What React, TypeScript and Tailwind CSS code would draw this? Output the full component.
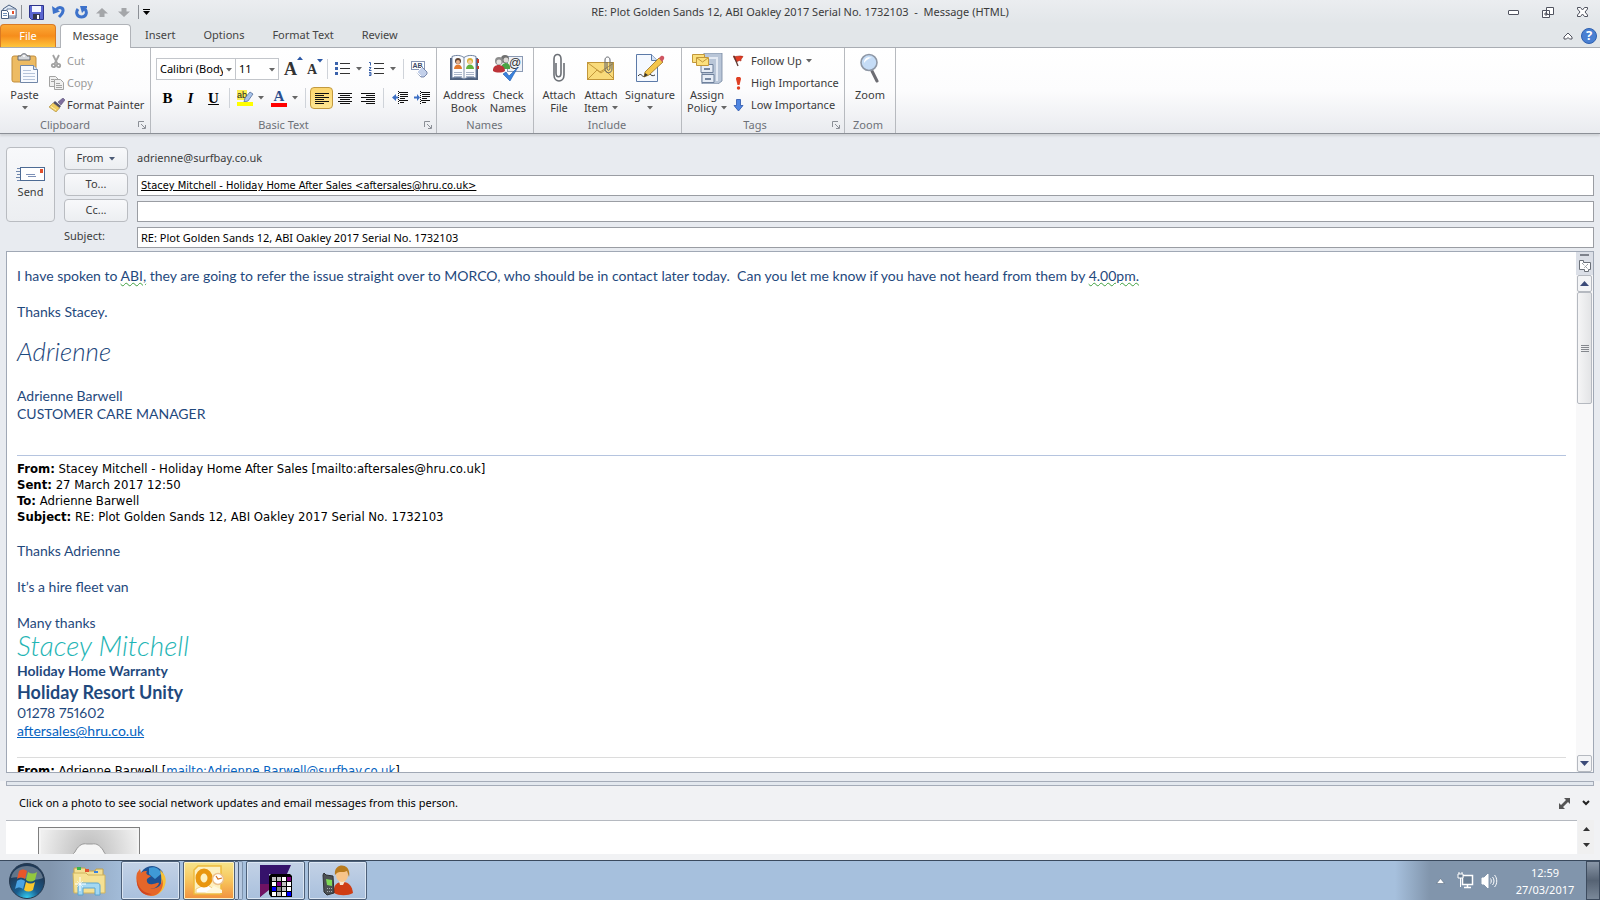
import React from 'react';

type IconProps = { className?: string };

const Caret = ({ className = 'fill-[#666]' }: IconProps) => (
  <svg width="6" height="4" viewBox="0 0 6 4" className={`shrink-0 ${className}`}>
    <path d="M0 0h6L3 3.500z" />
  </svg>
);

const Launcher = () => (
  <svg width="8" height="8" viewBox="0 0 8 8" fill="none" stroke="#8b8f96">
    <path d="M.5 6V.5H6M3 3l4 4M7.500 4v3.500H4" />
  </svg>
);

const MailIcon = () => (
  <svg width="17" height="16" viewBox="0 0 17 16">
    <path d="M3 5l6-4 7 4v9H3z" fill="#dfe9f5" stroke="#4a5f80" />
    <path d="M7 5h9v7H7z" fill="#fff" stroke="#6b7f9e" />
    <rect x="12" y="7" width="2" height="3" fill="#e2502d" />
    <path d="M1.500 6.500h5l2 2v6h-7z" fill="#fff" stroke="#4a5f80" />
    <path d="M3 9.500h4M3 11.500h4" stroke="#6f8fb8" />
  </svg>
);

const SaveIcon = () => (
  <svg width="15" height="15" viewBox="0 0 15 15">
    <path d="M.5.5h14v14h-12l-2-2z" fill="#5a66d0" stroke="#2d348c" />
    <rect x="3" y="1" width="9" height="6" fill="#f4f7ff" />
    <rect x="4" y="9" width="7" height="5" fill="#34384a" />
    <rect x="8" y="10" width="2" height="4" fill="#fff" />
  </svg>
);

const UndoIcon = () => (
  <svg width="13" height="14" viewBox="0 0 13 14" fill="none">
    <path d="M4 5c3-4 7.500-2.500 7 1-.3 3-2 4-4 6" stroke="#3d72cb" strokeWidth="3" />
    <path d="M0 1l1 8 7-2.500z" fill="#3d72cb" />
  </svg>
);

const RedoIcon = () => (
  <svg width="13" height="13" viewBox="0 0 13 13" fill="none">
    <path d="M3 3C0 7 2.500 11 6.500 11s6.500-4 3.500-8" stroke="#3d72cb" strokeWidth="3" />
    <path d="M5 0h7v1.500L7 7z" fill="#3d72cb" />
  </svg>
);

const ArrowUp = ({ className = '' }: IconProps) => (
  <svg width="12" height="9" viewBox="0 0 12 9" className={className}>
    <path d="M6 0l6 5.500H8.500V9h-5V5.500H0z" fill="#a4a6a9" />
  </svg>
);

const PasteIcon = () => (
  <svg width="28" height="31" viewBox="0 0 28 31">
    <rect x="1" y="3" width="24" height="26" rx="2" fill="#edbb63" stroke="#c18d3c" />
    <path d="M7 3h3c0-3 6-3 6 0h3v4H7z" fill="#d5d8dc" stroke="#666b73" />
    <circle cx="13" cy="3" r="1" fill="#fff" />
    <path d="M9.500 12.500h13l4 4v13h-17z" fill="#f7faff" stroke="#7187a8" />
    <path d="M22.500 12.500v4h4" fill="#dbe5f3" stroke="#7187a8" />
    <path d="M12 17.500h8M12 20.500h12M12 23.500h12M12 26.500h12" stroke="#b6c4da" />
  </svg>
);

const CutIcon = () => (
  <svg width="15" height="15" viewBox="0 0 15 15" fill="none" stroke="#a2a2a2" strokeWidth="1.800">
    <path d="M4 1l4.500 9M10 1L5.500 10" />
    <circle cx="4.500" cy="11.500" r="1.700" />
    <circle cx="9.500" cy="11.500" r="1.700" />
  </svg>
);

const CopyIcon = () => (
  <svg width="15" height="14" viewBox="0 0 15 14" fill="#f0f0f0" stroke="#a2a2a2">
    <path d="M.5.5h6l3 3v7h-9z" />
    <path d="M5.500 3.500h6l3 3v7h-9z" />
    <path d="M7 7.500h4M7 9.500h6M7 11.500h6M2 3.500h3M2 5.500h3" />
  </svg>
);

const BrushIcon = () => (
  <svg width="16" height="14" viewBox="0 0 16 14">
    <path d="M9 4l5-4 2 2-4 5z" fill="#7e6f9e" stroke="#4d466a" strokeWidth=".5" />
    <path d="M6 3l6 5-1.500 2L4 5z" fill="#50506a" />
    <path d="M4 5l6.500 5L7 14 0 9z" fill="#f0cd62" stroke="#a98630" strokeWidth=".6" />
    <path d="M2 8.500l5 3.500" stroke="#fff1b4" />
  </svg>
);

const BulletsIcon = ({ numbered = false }: { numbered?: boolean }) => (
  <svg width="15" height="14" viewBox="0 0 15 14">
    {numbered ? (
      <path d="M0 .5h1.500v3M0 5.500h2l-2 3h2.500M0 10.500h2v3H0m0-1.500h2" stroke="#3a62ab" fill="none" />
    ) : (
      <path d="M0 0h3v3H0zM0 5h3v3H0zM0 10h3v3H0z" fill="#3a62ab" />
    )}
    <path d="M5 1.500h10M5 6.500h10M5 11.500h10" stroke="#333" />
  </svg>
);

const linePaths = {
  left: 'M0 1.500h14M0 3.500h9M0 5.500h14M0 7.500h9M0 9.500h14M0 11.500h9',
  center: 'M0 1.500h14M2 3.500h10M0 5.500h14M2 7.500h10M0 9.500h14M2 11.500h10',
  right: 'M0 1.500h14M5 3.500h9M0 5.500h14M5 7.500h9M0 9.500h14M5 11.500h9',
};

const AlignIcon = ({ align }: { align: keyof typeof linePaths }) => (
  <svg width="14" height="13" viewBox="0 0 14 13" stroke="#111">
    <path d={linePaths[align]} />
  </svg>
);

const IndentIcon = ({ increase = false }: { increase?: boolean }) => (
  <svg width="16" height="14" viewBox="0 0 16 14">
    <path d="M7 1.500h9M8 3.500h8M8 5.500h8M8 7.500h5M7 9.500h9M8 11.500h4" stroke="#111" />
    <path d="M6.500 0v14" stroke="#111" strokeDasharray="1 1" />
    {increase ? <path d="M0 5.500h3V3l3 3.500L3 10V7.500H0z" fill="#3d6fc4" /> : <path d="M6 5.500H4V3L0 6.500 4 10V7.500h2z" fill="#3d6fc4" />}
  </svg>
);

const ClearFormatIcon = () => (
  <svg width="17" height="17" viewBox="0 0 17 17">
    <rect x=".5" y=".5" width="13" height="8" fill="#fff" stroke="#8996b4" />
    <text x="1.500" y="7" fontSize="7" fontWeight="700" fontFamily="Liberation Sans" fill="#3d4a68">AB</text>
    <path d="M6 11l5-5 5 5v2l-3 3h-3z" fill="#c3d0ea" stroke="#5f7199" strokeWidth=".8" />
    <path d="M6 11l4 4M11 6l-5 5" stroke="#fff" />
  </svg>
);

const HighlightIcon = () => (
  <svg width="17" height="17" viewBox="0 0 17 17">
    <rect width="10" height="10" fill="#f9ed52" />
    <text x="0" y="8" fontSize="9" fontFamily="Liberation Sans" fill="#222">ab</text>
    <path d="M8 8l5-6 3 2-5 7-4 1z" fill="#aac4ea" stroke="#44608f" strokeWidth=".7" />
    <rect y="12" width="16" height="4" fill="#ffff00" />
  </svg>
);

const AddressBookIcon = () => (
  <svg width="30" height="29" viewBox="0 0 30 29">
    <path d="M1 4h28v22H1z" fill="#4e617e" />
    <path d="M3 2.500c5-2 9-1 12 1 3-2 7-3 12-1V24c-5-1-9-1-12 1-3-2-7-2-12-1z" fill="#fafcff" stroke="#6b7f9e" />
    <path d="M15 3.500V25" stroke="#7d8ca5" />
    <circle cx="9" cy="7" r="3" fill="#5d4331" />
    <circle cx="9" cy="8" r="2" fill="#e9b28b" />
    <path d="M5 15c0-6 8-6 8 0z" fill="#e2792d" />
    <circle cx="21" cy="7" r="3" fill="#dab038" />
    <circle cx="21" cy="8" r="2" fill="#f2cda6" />
    <path d="M17 15c0-6 8-6 8 0z" fill="#63b13e" />
    <path d="M5 18.500h8M5 20.500h8M5 22.500h8M17 18.500h8M17 20.500h8M17 22.500h8" stroke="#a9b5c8" />
    <path d="M29 5v4M29 12v3" stroke="#c1392b" strokeWidth="2" />
  </svg>
);

const CheckNamesIcon = () => (
  <svg width="32" height="29" viewBox="0 0 32 29">
    <rect x="15.500" y="2.500" width="15" height="15" fill="#eef2f8" stroke="#8b9ab4" />
    <circle cx="13" cy="5" r="4" fill="#707070" />
    <circle cx="14" cy="6" r="2.500" fill="#dcd9d6" />
    <path d="M9 15c0-8 10-8 9 0z" fill="#49a446" />
    <circle cx="7" cy="7" r="4" fill="#8d8d8d" />
    <circle cx="7" cy="8" r="2.500" fill="#e4e1de" />
    <path d="M1 17c-1-8 12-8 12 0-3 2-9 2-12 0z" fill="#bd3338" />
    <text x="17" y="13" fontSize="12" fontFamily="Liberation Sans" fill="#333">@</text>
    <path d="M11 20l3-2 3 4 9-9-8 14z" fill="#3a82dd" stroke="#1b58ad" strokeWidth=".6" />
  </svg>
);

const ClipIcon = () => (
  <svg width="14" height="31" viewBox="0 0 14 31" fill="none">
    <path d="M4 10v10c0 5 5 5 5 0V6c0-6-7-6-7 0v16c0 8 10 8 10 0V10" stroke="#6b6f75" strokeWidth="1.600" />
  </svg>
);

const AttachItemIcon = () => (
  <svg width="28" height="25" viewBox="0 0 28 25">
    <rect x=".5" y="6.500" width="26" height="17" fill="#f9db7b" stroke="#c2973a" />
    <path d="M1 23l9-9 4 3 4-3 9 9M1 7l12 9L27 7" fill="none" stroke="#c2973a" />
    <path d="M20 6v6c0 3 3 3 3 0V4c0-4-5-4-5 0v9c0 5 7 5 7 0V6" fill="none" stroke="#5d6168" />
  </svg>
);

const SignatureIcon = () => (
  <svg width="30" height="30" viewBox="0 0 30 30">
    <path d="M1.500 1.500h15l6 6v21h-21z" fill="#f5f9ff" stroke="#5c7aa8" />
    <path d="M16.500 1.500v6h6" fill="#d5e2f4" stroke="#5c7aa8" />
    <path d="M3 23c4-5 4 4 8-1s4 3 9 0" fill="none" stroke="#333" />
    <path d="M10 19L24 5l4 4-14 13-5 2z" fill="#f4c64c" stroke="#97701f" strokeWidth=".8" />
    <path d="M24 5l2-2c2-1 4 1 3 3l-2 3z" fill="#cf5561" />
    <path d="M10 20l3 2-4 2z" fill="#333" />
  </svg>
);

const PolicyIcon = () => (
  <svg width="31" height="31" viewBox="0 0 31 31">
    <path d="M10 2l3-2h17v28l-4 3H10z" fill="#b9c6d8" stroke="#7486a0" strokeWidth=".8" />
    <path d="M9 11.500h12v8H9zM10 21.500h12v8H10z" fill="#e7edf6" stroke="#6f819c" />
    <path d="M13 5h12v23" fill="none" stroke="#e4eaf3" strokeWidth="2" />
    <path d="M12 15h6v2h-6zM13 25h6v2h-6z" fill="#7486a0" />
    <path d="M.5 1.500h12v8H.5z" fill="#fbe07e" stroke="#c2973a" />
    <path d="M4.500 4.500h12v8h-12z" fill="#fbe07e" stroke="#c2973a" />
    <path d="M5 5l5.500 4L16 5" fill="none" stroke="#c2973a" />
  </svg>
);

const FlagIcon = () => (
  <svg width="11" height="12" viewBox="0 0 11 12">
    <path d="M0 1c3 1.500 6-1 10 .5-1 2-2.500 2.500-2 4.500-2-1.500-3 1-5 .5z" fill="#e23b24" stroke="#a3200f" strokeWidth=".6" />
    <path d="M1 1l4 10" stroke="#5b3a33" strokeWidth="1.300" />
  </svg>
);

const HighIcon = () => (
  <svg width="11" height="13" viewBox="0 0 11 13" fill="#df3f23">
    <path d="M3 2c0-3 5-3 5 0L6.500 8h-2z" />
    <circle cx="5.500" cy="11" r="1.700" />
  </svg>
);

const LowIcon = () => (
  <svg width="11" height="13" viewBox="0 0 11 13">
    <path d="M3.500.5h4v6h2.500l-4.500 5.500L1 6.500h2.500z" fill="#4f86e2" stroke="#2c56ab" strokeWidth=".8" />
  </svg>
);

const ZoomIcon = () => (
  <svg width="20" height="30" viewBox="0 0 20 30">
    <path d="M12 18l5 10" stroke="#6c6c72" strokeWidth="3" strokeLinecap="round" />
    <circle cx="9" cy="9.500" r="8" fill="#c5dcf6" stroke="#8e97a5" strokeWidth="1.600" />
    <path d="M4 10c0-5 4-7 8-5-3 0-6 2-8 5z" fill="#fff" />
  </svg>
);

const SendIcon = () => (
  <svg width="30" height="15" viewBox="0 0 30 15">
    <path d="M1 1.500h3M0 4.500h4M1 7.500h3M0 10.500h4M1 13.500h3" stroke="#6f87ad" />
    <rect x="4.500" y=".5" width="24" height="13" fill="#fff" stroke="#4d6b94" />
    <rect x="24" y="2" width="3" height="4" fill="#e2502d" />
    <path d="M10 7.500h9M12 9.500h8" stroke="#7c90b7" />
  </svg>
);

const WindowIcons = () => (
  <div className="flex items-center gap-[23px] pr-3">
    <button aria-label="Minimize">
      <svg width="11" height="5" viewBox="0 0 11 5"><rect x=".5" y=".5" width="10" height="4" rx=".5" fill="#fff" stroke="#50535f" /></svg>
    </button>
    <button aria-label="Restore">
      <svg width="12" height="11" viewBox="0 0 12 11" fill="#fff" stroke="#50535f">
        <path d="M4.500.5h7v7h-7zM.5 3.500h7v7h-7zM3 6h2v2H3z" />
      </svg>
    </button>
    <button aria-label="Close">
      <svg width="11" height="10" viewBox="0 0 11 10">
        <path d="M.5.5h3l2 2.500 2-2.500h3v1.500L8 5l2.500 3v1.500h-3L5.500 7l-2 2.500h-3V8L3 5 .5 2z" fill="#fff" stroke="#50535f" />
      </svg>
    </button>
  </div>
);

const StartOrb = () => (
  <svg width="38" height="38" viewBox="0 0 38 38">
    <defs>
      <radialGradient id="orb" cx="50%" cy="100%" r="75%">
        <stop offset="0" stopColor="#35d3f7" />
        <stop offset=".45" stopColor="#1a5d8e" />
        <stop offset="1" stopColor="#1f3a58" />
      </radialGradient>
    </defs>
    <circle cx="19" cy="19" r="17.500" fill="url(#orb)" stroke="#26394f" />
    <path d="M3 16C6 0 32 0 35 16 24 21 13 13 3 16z" fill="#fff" opacity=".3" />
    <path d="M11 9c3-2 5-2 8 0l-2 8c-3-2-5-2-8 0z" fill="#e8562a" />
    <path d="M20 10c3 2 6 2 9 0l-2 8c-3 2-6 2-9 0z" fill="#93c83e" />
    <path d="M9 19c3-2 5-2 8 0l-2 8c-3-2-5-2-8 0z" fill="#4aa3e4" />
    <path d="M18 20c3 2 6 2 9 0l-2 8c-3 2-6 2-9 0z" fill="#fbc72e" />
  </svg>
);

const ExplorerIcon = () => (
  <svg width="34" height="30" viewBox="0 0 34 30">
    <path d="M2 2h11l2 3h8l1-2h7v23H2z" fill="#f3df93" stroke="#c0a04c" />
    <rect x="5" y="1" width="4" height="3" fill="#3bb54a" />
    <rect x="13" y="3" width="4" height="3" fill="#e2502d" />
    <rect x="22" y="5" width="4" height="2" fill="#3a82dd" />
    <path d="M1 7h13l2 2h17v18H2z" fill="#f5e194" stroke="#d0b35c" />
    <path d="M6 29V20c0-2 1-3 3-3h16c2 0 3 1 3 3v9h-5v-7H11v7z" fill="#a3d8f2" stroke="#5aa4d0" />
    <path d="M8 11v14M3 18h11" stroke="#fff" />
    <path d="M5 15l6 6M11 15l-6 6" stroke="#fff" strokeWidth=".6" />
  </svg>
);

const FirefoxIcon = () => (
  <svg width="32" height="32" viewBox="0 0 32 32">
    <circle cx="17" cy="13" r="12" fill="#1d5294" />
    <path d="M14 3c5-2 11 0 12 6l-6 5-6-5z" fill="#3f9ad6" />
    <path d="M25 5c5 4 7 9 5 15-2 7-8 11-14 11 8-3 13-11 9-26z" fill="#f8c23a" />
    <path d="M2 8l3-4 1 4c2-2 4-2 6-2-1 2-1 3 1 4l3 1-4 3c-1 4 2 6 6 5 2 0 4-2 6-1-1 4-5 6-9 5 6 2 12-2 12-9 3 7-2 17-11 17C6 31-1 19 2 8z" fill="#e5662a" />
    <path d="M2 14c1 9 6 14 15 15-7 3-16-3-15-15z" fill="#cf4520" />
  </svg>
);

const OutlookIcon = () => (
  <svg width="32" height="32" viewBox="0 0 32 32">
    <path d="M5 1h23v28H1V5z" fill="#fdf0c0" stroke="#eebb3c" strokeWidth="1.500" />
    <path d="M3 24l10-5 14 9H3z" fill="#fff" stroke="#f0cf80" />
    <ellipse cx="11" cy="13" rx="6" ry="7" fill="none" stroke="#e9960f" strokeWidth="5" />
    <circle cx="25" cy="14" r="5.500" fill="#fff" stroke="#ecc08a" strokeWidth="1.500" />
    <path d="M23 11l2 3 4-1" fill="none" stroke="#d56f1c" strokeWidth="1.200" />
    <path d="M12 28l9-7 8 4v3z" fill="#fff8dc" />
  </svg>
);

const cells = ['#c0c0c0', '#c0c0c0', '#fff', '#800080', '#fff', '#800080', '#c0c0c0', '#fff', '#0000ff', '#808080', '#c0c0c0', '#fff', '#fff', '#c0c0c0', '#fff', '#0000ff'];

const GridAppIcon = () => (
  <svg width="32" height="32" viewBox="0 0 32 32">
    <path d="M0 0h31l-4 9H9v15L0 32z" fill="#35126b" />
    <path d="M0 19h9v6l-9 7z" fill="#701263" />
    <path d="M9 11l2-2h19l2 2v21H11l-2-3z" />
    {cells.map((fill, i) => (
      <rect key={i} x={12 + (i % 4) * 5} y={12 + Math.floor(i / 4) * 5} width="4" height="4" fill={fill} />
    ))}
  </svg>
);

const PhoneUserIcon = () => (
  <svg width="32" height="32" viewBox="0 0 32 32">
    <path d="M12 28c-1-8 3-11 9-11 6 0 9 4 10 11-5 3-14 3-19 0z" fill="#cf3d14" />
    <path d="M17 16h6l-2 4h-3z" fill="#f7e4cc" />
    <ellipse cx="20" cy="10" rx="6" ry="7" fill="#f7c489" />
    <path d="M13 10c-2-13 17-13 14 2l-2-6c-4 2-8 0-10 2z" fill="#b97b1d" />
    <path d="M1 10l1-2 2 2 7 1 1 17-7 2-3-3z" fill="#4c5154" stroke="#2d3032" />
    <path d="M4 14l6 1v6l-5-1z" fill="#7ed957" />
    <path d="M5 23.500h6M5 26.500h6" stroke="#a9afb3" strokeDasharray="1 1" />
  </svg>
);

const tabs = ['Insert', 'Options', 'Format Text', 'Review'];

const Separator = () => <span className="w-px h-5 bg-[#cfd3d9]" />;

type GroupProps = { label: string; launcher?: boolean; className?: string; children: React.ReactNode };

const Group = ({ label, launcher, className = '', children }: GroupProps) => (
  <section className={`flex flex-col border-r border-[#b7babf] ${className}`}>
    <div className="flex flex-1">{children}</div>
    <div className="flex h-4 items-center pr-1 leading-4 text-[#6d7178]">
      <span className="flex-1 text-center">{label}</span>
      {launcher && (
        <button aria-label={`${label} options`} className="pl-2">
          <Launcher />
        </button>
      )}
    </div>
  </section>
);

type BigButtonProps = { icon: React.ReactNode; lines: string[]; caret?: boolean; className?: string };

// Second row holds either the second word or, for one-word buttons, the arrow
const BigButton = ({ icon, lines, caret, className = '' }: BigButtonProps) => (
  <button className={`flex flex-col items-center whitespace-nowrap leading-[13px] ${className}`}>
    <span className="flex h-10 items-center">{icon}</span>
    <span>{lines[0]}</span>
    <span className="flex h-[13px] items-center gap-1">
      {lines[1]}
      {caret && <Caret />}
    </span>
  </button>
);

const SmallButton = ({ icon, label, caret, disabled }: { icon: React.ReactNode; label: string; caret?: boolean; disabled?: boolean }) => (
  <button disabled={disabled} className="flex h-[22px] items-center whitespace-nowrap disabled:text-[#9a9a9a]">
    <span className="flex w-[18px] shrink-0">{icon}</span>
    {label}
    {caret && <span className="pl-1"><Caret /></span>}
  </button>
);

const TitleBar = () => (
  <header className="grid h-6 grid-cols-[1fr_auto_1fr] items-center bg-gradient-to-b from-[#ebedf0] to-[#e2e6e9]">
    <div className="flex items-center">
      <MailIcon />
      <span className="mx-1 h-3.5 w-px bg-[#8c9096]" />
      <div className="flex items-center gap-2 pl-[3px]">
        <button aria-label="Save"><SaveIcon /></button>
        <button aria-label="Undo"><UndoIcon /></button>
        <button aria-label="Redo" className="pl-0.5"><RedoIcon /></button>
        <button aria-label="Previous item"><ArrowUp /></button>
        <button aria-label="Next item" className="pl-0.5"><ArrowUp className="rotate-180" /></button>
      </div>
      <span className="ml-2 mr-1 h-3.5 w-px bg-[#8c9096]" />
      <button aria-label="Customize toolbar">
        <svg width="7" height="6" viewBox="0 0 7 6"><path d="M0 0h7v1H0zM0 2h7L3.500 6z" /></svg>
      </button>
    </div>
    <h1 className="text-[#3b3b3b]">RE: Plot Golden Sands 12, ABI Oakley 2017 Serial No. 1732103&nbsp; -&nbsp; Message (HTML)</h1>
    <div className="flex justify-end"><WindowIcons /></div>
  </header>
);

const TabBar = () => (
  <nav className="flex h-6 items-end border-b border-[#a9adb3] bg-[#e2e6e9] text-[#444]">
    <button className="h-[23px] w-14 rounded-t-sm border border-b-0 border-[#d97a24] bg-gradient-to-b from-[#fba935] via-[#f68d1b] to-[#fdc53c] text-white">File</button>
    <button className="-mb-px ml-1 h-6 w-[71px] rounded-t-sm border border-b-0 border-[#b0b3b8] bg-white">Message</button>
    {tabs.map((tab) => (
      <button key={tab} className="h-[23px] px-3.5">{tab}</button>
    ))}
    <div className="ml-auto flex h-[23px] items-center gap-2 pr-[3px]">
      <button aria-label="Minimize the ribbon">
        <svg width="10" height="8" viewBox="0 0 10 8"><path d="M1 5l4-4 4 4v2H6.500L5 5.500 3.500 7H1z" fill="#fff" stroke="#50535f" /></svg>
      </button>
      <button aria-label="Help" className="flex size-4 items-center justify-center rounded-full border border-[#2f61b0] bg-[#4a80d2] text-[13px] font-bold text-white">?</button>
    </div>
  </nav>
);

const BasicText = () => (
  <div className="flex flex-col gap-[7px] pl-[5px] pt-2.5">
    <div className="flex h-[22px] items-center">
      <div className="relative">
        <select aria-label="Font" className="h-[22px] w-20 appearance-none overflow-hidden border border-[#c3c6cb] bg-white pl-[3px] pr-3 text-black">
          <option>Calibri (Body)</option>
        </select>
        <span className="pointer-events-none absolute right-1 top-2.5"><Caret /></span>
      </div>
      <div className="relative">
        <select aria-label="Font size" className="-ml-px h-[22px] w-11 appearance-none border border-[#c3c6cb] bg-white pl-[3px] text-black">
          <option>11</option>
        </select>
        <span className="pointer-events-none absolute right-1 top-2.5"><Caret /></span>
      </div>
      <button aria-label="Grow font" className="ml-[5px] flex w-5 font-['Liberation_Serif',serif] text-[18px] font-bold text-[#333]">
        A<Caret className="rotate-180 fill-[#2b57a5]" />
      </button>
      <button aria-label="Shrink font" className="ml-[3px] flex w-5 font-['Liberation_Serif',serif] text-[14px] font-bold text-[#333]">
        A<Caret className="fill-[#2b57a5]" />
      </button>
      <div className="flex items-center gap-[7px]">
        <Separator />
        <button aria-label="Bullets" className="flex items-center gap-1.5"><BulletsIcon /><Caret /></button>
        <button aria-label="Numbering" className="flex items-center gap-1.5"><BulletsIcon numbered /><Caret /></button>
        <Separator />
        <button aria-label="Clear formatting"><ClearFormatIcon /></button>
      </div>
    </div>
    <div className="flex h-[22px] items-center text-black">
      <button className="w-[23px] font-['Liberation_Serif',serif] text-[15px] font-bold">B</button>
      <button className="w-[23px] font-['Liberation_Serif',serif] text-[15px] font-bold italic">I</button>
      <button className="w-[23px] font-['Liberation_Serif',serif] text-[15px] font-bold underline">U</button>
      <div className="flex items-center gap-[7px] pl-1">
        <Separator />
        <button aria-label="Highlight colour" className="flex items-center gap-1"><HighlightIcon /><Caret /></button>
        <button aria-label="Font colour" className="flex items-center gap-[5px]">
          <span className="w-4 border-b-4 border-[#f00] font-['Liberation_Serif',serif] text-[15px] font-bold leading-[13px] text-[#2b4f8f]">A</span>
          <Caret />
        </button>
        <Separator />
      </div>
      <button aria-label="Align left" className="ml-1 flex h-[22px] w-[23px] items-center justify-center rounded-sm border border-[#c29a3f] bg-gradient-to-b from-[#fbd56e] to-[#fee691]">
        <AlignIcon align="left" />
      </button>
      <button aria-label="Center" className="ml-[5px]"><AlignIcon align="center" /></button>
      <button aria-label="Align right" className="ml-[9px] mr-2"><AlignIcon align="right" /></button>
      <Separator />
      <button aria-label="Decrease indent" className="ml-2"><IndentIcon /></button>
      <button aria-label="Increase indent" className="ml-1.5"><IndentIcon increase /></button>
    </div>
  </div>
);

const Ribbon = () => (
  <div className="flex h-[86px] shrink-0 border-b border-[#8b8f96] bg-gradient-to-b from-white via-[#fcfcfd] to-[#e9ebef] text-[#3b3b3b] shadow-[0_2px_2px_#cfd2d7]">
    <Group label="Clipboard" launcher className="w-[151px]">
      <BigButton icon={<PasteIcon />} lines={['Paste']} caret className="w-[49px]" />
      <div className="flex flex-col pt-0.5">
        <SmallButton icon={<CutIcon />} label="Cut" disabled />
        <SmallButton icon={<CopyIcon />} label="Copy" disabled />
        <SmallButton icon={<BrushIcon />} label="Format Painter" />
      </div>
    </Group>
    <Group label="Basic Text" launcher className="w-[286px]">
      <BasicText />
    </Group>
    <Group label="Names" className="w-[97px] pl-[3px]">
      <BigButton icon={<AddressBookIcon />} lines={['Address', 'Book']} className="w-12" />
      <BigButton icon={<CheckNamesIcon />} lines={['Check', 'Names']} className="w-10" />
    </Group>
    <Group label="Include" className="w-[148px] pl-[3px]">
      <BigButton icon={<ClipIcon />} lines={['Attach', 'File']} className="w-11" />
      <BigButton icon={<AttachItemIcon />} lines={['Attach', 'Item']} caret className="w-10" />
      <BigButton icon={<SignatureIcon />} lines={['Signature']} caret className="w-[58px]" />
    </Group>
    <Group label="Tags" launcher className="w-[163px] pl-1">
      <BigButton icon={<PolicyIcon />} lines={['Assign', 'Policy']} caret className="w-[42px]" />
      <div className="flex flex-col pl-[5px] pt-0.5">
        <SmallButton icon={<FlagIcon />} label="Follow Up" caret />
        <SmallButton icon={<HighIcon />} label="High Importance" />
        <SmallButton icon={<LowIcon />} label="Low Importance" />
      </div>
    </Group>
    <Group label="Zoom" className="w-[51px]">
      <BigButton icon={<ZoomIcon />} lines={['Zoom']} className="w-full" />
    </Group>
  </div>
);

const fieldButton = 'flex h-[23px] w-16 items-center justify-center gap-1.5 rounded-sm border border-[#b9bcc1] bg-gradient-to-b from-[#f8f9fb] to-[#eceef1]';
const fieldInput = 'h-[21px] w-full self-end border border-[#9a9da3] bg-white px-[3px] text-black';

const Fields = () => (
  <div className="flex shrink-0 gap-[9px] px-1.5 pt-[13px] text-[#3b3b3b]">
    <button className="flex h-[75px] w-[49px] flex-col items-center justify-center rounded-sm border border-[#b9bcc1] bg-gradient-to-b from-[#f8f9fb] to-[#eceef1]">
      <SendIcon />
      <span className="leading-5">Send</span>
    </button>
    <div className="grid flex-1 grid-cols-[64px_1fr] items-center gap-x-[9px] gap-y-[3px]">
      <button className={fieldButton}>From <Caret className="fill-[#4b5a75]" /></button>
      <span>adrienne@surfbay.co.uk</span>
      <button className={fieldButton}>To...</button>
      <input aria-label="To" className={`${fieldInput} font-['DejaVu_Sans_Condensed',sans-serif] underline`} defaultValue="Stacey Mitchell - Holiday Home After Sales <aftersales@hru.co.uk>" />
      <button className={fieldButton}>Cc...</button>
      <input aria-label="Cc" className={fieldInput} />
      <label htmlFor="subject" className="flex h-[23px] items-center">Subject:</label>
      <input id="subject" className={fieldInput} defaultValue="RE: Plot Golden Sands 12, ABI Oakley 2017 Serial No. 1732103" />
    </div>
  </div>
);

const squiggle = 'underline decoration-wavy decoration-[#3f9f3f] decoration-1 underline-offset-1';

const Message = () => (
  <article className="min-w-0 flex-1 overflow-hidden pl-2.5 pr-2.5 pt-[15px] font-[Lato,sans-serif] text-[14px] leading-[18px] text-[#1f497d]">
    <p>
      I have spoken to <span className={squiggle}>ABI,</span> they are going to refer the issue straight over to MORCO, who should be in contact later today.&nbsp; Can you let me know if you have not heard from them by <span className={squiggle}>4.00pm.</span>
    </p>
    <p className="pt-[18px]">Thanks Stacey.</p>
    <p className="pt-4 text-[26px] font-light italic leading-[28px]">Adrienne</p>
    <p className="pt-[22px]">Adrienne Barwell</p>
    <p>CUSTOMER CARE MANAGER</p>
    <hr className="mt-8 border-[#b5c4df]" />
    <div className="pt-[5px] font-['DejaVu_Sans_Condensed',sans-serif] text-[13px] leading-4 text-black">
      <p><b>From:</b> Stacey Mitchell - Holiday Home After Sales [mailto:aftersales@hru.co.uk]</p>
      <p><b>Sent:</b> 27 March 2017 12:50</p>
      <p><b>To:</b> Adrienne Barwell</p>
      <p><b>Subject:</b> RE: Plot Golden Sands 12, ABI Oakley 2017 Serial No. 1732103</p>
    </div>
    <p className="pt-[17px]">Thanks Adrienne</p>
    <p className="pt-[18px]">It’s a hire fleet van</p>
    <p className="pt-[18px]">Many thanks</p>
    <p className="pb-1 text-[28px] font-light italic leading-[26px] text-[#1fb5b5]">Stacey Mitchell</p>
    <p className="font-bold">Holiday Home Warranty</p>
    <p className="text-[18px] font-bold leading-6">Holiday Resort Unity</p>
    <p className="proportional-nums">01278 751602</p>
    <p><a href="mailto:aftersales@hru.co.uk" className="text-[#0563c1] underline">aftersales@hru.co.uk</a></p>
    <hr className="mt-[17px] border-[#dcdcdc]" />
    <p className="pt-[5px] font-['DejaVu_Sans_Condensed',sans-serif] text-[13px] leading-4 text-black">
      <b>From:</b> Adrienne Barwell [<a href="mailto:Adrienne.Barwell@surfbay.co.uk" className="text-[#0563c1] underline">mailto:Adrienne.Barwell@surfbay.co.uk</a>]
    </p>
  </article>
);

const ScrollBar = () => (
  <div className="flex w-[17px] flex-col items-center bg-[#f8f8f9]">
    <div className="flex h-[23px] w-full flex-col items-center gap-1 bg-[#dbdfe7] pt-0.5">
      <span className="h-0.5 w-[9px] bg-[#7d828c]" />
      <svg width="12" height="12" viewBox="0 0 12 12" fill="#fff" stroke="#6b7078">
        <path d="M.5.500h4v2h7v7h-2v2h-4v-2h-5z" />
        <path d="M3 3l6 6M9 4L5 8" strokeDasharray="1 1" />
      </svg>
    </div>
    <button aria-label="Scroll up" className="flex h-[17px] w-[15px] items-center justify-center rounded-xs border border-[#b5b9c0] bg-[#f3f4f6]">
      <svg width="9" height="5" viewBox="0 0 9 5" fill="#3b4a78"><path d="M4.500 0L9 5H0z" /></svg>
    </button>
    <div className="flex h-[112px] w-[15px] flex-col items-center justify-center gap-px rounded-xs border border-[#b5b9c0] bg-gradient-to-r from-[#f5f5f6] to-[#e3e4e6]">
      {[0, 1, 2, 3].map((i) => <span key={i} className="h-px w-2 bg-[#85888e]" />)}
    </div>
    <button aria-label="Scroll down" className="mt-auto flex h-[17px] w-[15px] items-center justify-center rounded-xs border border-[#b5b9c0] bg-[#f3f4f6]">
      <svg width="9" height="5" viewBox="0 0 9 5" fill="#3b4a78"><path d="M0 0h9L4.500 5z" /></svg>
    </button>
  </div>
);

const PeoplePane = () => (
  <aside className="shrink-0 bg-[#f1f2f4] px-1.5 pb-1.5">
    <div className="h-[5px] border border-[#a5acb8] bg-[#e3e8ee]" />
    <div className="flex h-[34px] items-center pl-[13px] pr-1 text-black">
      Click on a photo to see social network updates and email messages from this person.
      <div className="ml-auto flex items-center gap-3">
        <button aria-label="Expand">
          <svg width="11" height="11" viewBox="0 0 11 11" fill="#555"><path d="M5 0h6v6L9 4 4 9l2 2H0V5l2 2 5-5z" /></svg>
        </button>
        <button aria-label="Collapse">
          <svg width="8" height="6" viewBox="0 0 8 6" fill="none" stroke="#222" strokeWidth="2"><path d="M1 1l3 3 3-3" /></svg>
        </button>
      </div>
    </div>
    <div className="flex h-[34px]">
      <div className="flex-1 overflow-hidden border-t border-[#b5b9c0] bg-white pl-8 pt-1.5">
        <div className="flex h-24 w-[102px] justify-center border border-[#7f7f7f] bg-[radial-gradient(ellipse_at_50%_30%,#b9b9b9,#efefef_70%)] pt-[15px] shadow-[inset_0_0_0_2px_#f4f4f4]">
          <svg width="38" height="20" viewBox="0 0 38 20" fill="#f6f6f6" stroke="#999">
            <path d="M1 20v-6c1-3 4-4 5-7 3-5 7-7 11-6h5c5-1 8 2 11 6 1 3 3 4 4 7v6" />
          </svg>
        </div>
      </div>
      <div className="ml-px flex w-4 flex-col items-center justify-between bg-[#f0f0f0] py-[7px]">
        <svg width="7" height="4" viewBox="0 0 7 4" fill="#333"><path d="M3.500 0L7 4H0z" /></svg>
        <svg width="7" height="4" viewBox="0 0 7 4" fill="#333"><path d="M0 0h7L3.500 4z" /></svg>
      </div>
    </div>
  </aside>
);

const taskButton = 'flex h-[39px] w-[59px] items-center justify-center rounded-xs border border-[#4d6079] bg-gradient-to-b from-[#c3d2e6] to-[#a9c0dd] shadow-[inset_0_0_0_1px_#dbe6f3]';

const TaskBar = () => (
  <footer className="flex h-10 shrink-0 items-center border-t border-[#3a4a5e] bg-[linear-gradient(90deg,#8296ae_0,#8296ae_50px,#a6c0dd_130px,#a6c0dd_calc(100%-205px),#8195ac_calc(100%-170px))] text-white">
    <button aria-label="Start" className="ml-2"><StartOrb /></button>
    <button aria-label="File Explorer" className="ml-[26px]"><ExplorerIcon /></button>
    <div className="ml-[15px] flex gap-[3px]">
      <button aria-label="Firefox" className={taskButton}><FirefoxIcon /></button>
      <div className="flex">
        <button aria-label="Outlook" className="flex h-[39px] w-[52px] items-center justify-center rounded-xs border border-[#4d6079] bg-gradient-to-b from-[#f6e58a] via-[#f7c55c] to-[#f0913f] shadow-[inset_0_0_0_1px_#fdf1c4]"><OutlookIcon /></button>
        <span className="h-[39px] w-1 rounded-r-xs border border-l-0 border-[#4d6079] bg-[#c3d2e6]" />
        <span className="h-[39px] w-1 rounded-r-xs border border-l-0 border-[#7e93ad] bg-[#b5c8e0]" />
      </div>
      <button aria-label="Grid" className={taskButton}><GridAppIcon /></button>
      <button aria-label="Contacts" className={taskButton}><PhoneUserIcon /></button>
    </div>
    <div className="ml-auto flex h-full items-center">
      <button aria-label="Show hidden icons">
        <svg width="9" height="6" viewBox="0 0 9 6"><path d="M4.500.5l4 5h-8z" fill="#fff" stroke="#5a6b80" strokeWidth=".6" /></svg>
      </button>
      <svg width="17" height="17" viewBox="0 0 17 17" className="ml-3">
        <path d="M5.500 3.500h10v9h-10z" fill="#6b7f95" stroke="#fff" strokeWidth="1.500" />
        <path d="M7 15.500h7M10.500 13v2" stroke="#fff" strokeWidth="1.500" />
        <path d="M1 2h5v4H1zM2 0v2M5 0v2M3.500 6v9" fill="#6b7f95" stroke="#fff" />
      </svg>
      <svg width="17" height="16" viewBox="0 0 17 16" className="ml-[7px]" fill="none" stroke="#fff">
        <path d="M1 5h2l4-4v14l-4-4H1z" fill="#fff" />
        <path d="M9.500 5.500c1 1 1 4 0 5M11.500 4c2 2 2 6 0 8M13.500 2c3 3 3 9 0 12" />
      </svg>
      <time className="ml-1.5 w-[82px] text-center leading-[17px]">12:59<br />27/03/2017</time>
      <button aria-label="Show desktop" className="h-full w-[14px] border border-[#3d4b5e] bg-gradient-to-b from-[#8a97a8] via-[#566374] to-[#7a8899]" />
    </div>
  </footer>
);

export default function App() {
  return (
    <div className="flex h-screen flex-col overflow-hidden bg-[#e8ebf0] font-['Noto_Sans',sans-serif] text-[11px]">
      <TitleBar />
      <TabBar />
      <Ribbon />
      <Fields />
      <main className="mx-1.5 mb-2 mt-[3px] flex min-h-0 flex-1 border border-[#a0a8b5] bg-white">
        <Message />
        <ScrollBar />
      </main>
      <PeoplePane />
      <TaskBar />
    </div>
  );
}
